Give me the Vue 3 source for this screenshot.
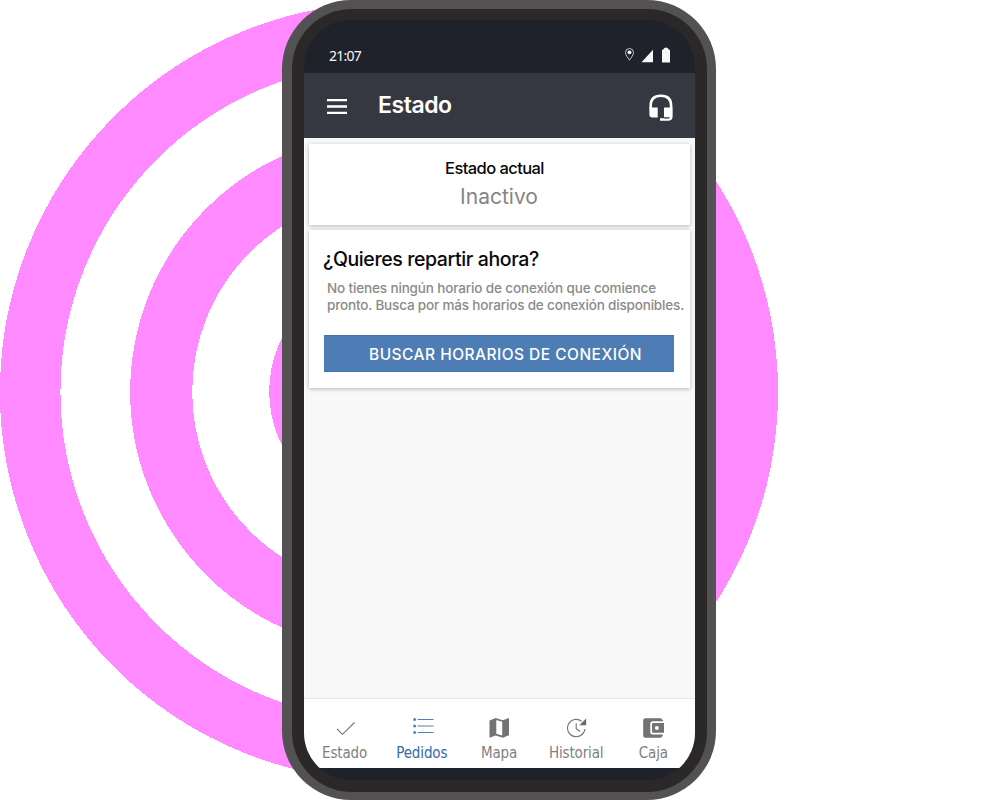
<script setup>
const tabs = [
  { id: 'estado', label: 'Estado' },
  { id: 'pedidos', label: 'Pedidos', active: true },
  { id: 'mapa', label: 'Mapa' },
  { id: 'historial', label: 'Historial' },
  { id: 'caja', label: 'Caja' },
]
</script>

<template>
  <main class="stage">
    <svg class="rings" viewBox="0 0 1000 800" shape-rendering="crispEdges" aria-hidden="true">
      <circle cx="389" cy="391.8" r="358.8" fill="none" stroke="#ff8aff" stroke-width="60.5" />
      <circle cx="389.2" cy="391.8" r="228" fill="none" stroke="#ff8aff" stroke-width="62" />
      <circle cx="389.2" cy="391.8" r="120" fill="#ff8aff" />
      <path d="M716 150H790V640H716Z" fill="#fff" />
      <circle cx="389" cy="391.8" r="389" fill="#ff8aff" clip-path="inset(0 0 0 327px)" />
    </svg>

    <section class="phone">
      <div class="bezel">
        <div class="screen">
          <div class="status">
            <span class="time">21:07</span>
            <svg class="signals" width="50" height="18" viewBox="0 0 50 18" aria-hidden="true">
              <path d="M5.500 13.200C3.800 10.400 1.500 8.200 1.500 5.500a4 4 0 0 1 8 0c0 2.700-2.300 4.900-4 7.700Z" fill="none" stroke="#c3c4c8" stroke-width="1" />
              <circle cx="5.500" cy="5.300" r="1.900" fill="#fff" />
              <path d="M29 2.800V15.200H17.500Z" fill="#f7f7f7" />
              <path d="M38 3.200 39.700 2Q40 .5 42 .5t2.300 1.500L46 3.200V15.500H38Z" fill="#f7f7f7" />
            </svg>
          </div>
          <header class="appbar">
            <svg class="menu" width="20" height="15" viewBox="0 0 20 15" aria-hidden="true">
              <path d="M0 1.200H20M0 7.500H20M0 13.800H20" stroke="#fff" stroke-width="2.300" />
            </svg>
            <h1>Estado</h1>
            <svg class="headset" width="24" height="28" viewBox="0 0 24 28" aria-hidden="true">
              <path d="M1.700 15V11.500C1.700 5.200 5.500 1.700 11.900 1.700S22.100 5.200 22.100 11.500V23q0 2.500-3 2.500H11" fill="none" stroke="#fff" stroke-width="2.600" />
              <path d="M.4 13.500H8.700V23.400H3.400Q.4 23.400.4 20.400ZM15 13.500H23.400V23.400H15Z" fill="#fff" />
              <path d="M15 23.900H20.500" stroke="#363841" stroke-width="1" />
            </svg>
          </header>

          <div class="content">
            <article class="card current">
              <h2>Estado actual</h2>
              <p>Inactivo</p>
            </article>
            <article class="card deliver">
              <h2>¿Quieres repartir ahora?</h2>
              <p><span class="l1">No tienes ningún horario de conexión que comience</span><br /><span class="l2">pronto. Busca por más horarios de conexión disponibles.</span></p>
              <button type="button">BUSCAR HORARIOS DE CONEXIÓN</button>
            </article>
          </div>

          <nav>
            <a v-for="tab in tabs" :key="tab.id" :class="['tab', tab.id, { active: tab.active }]">
              <svg width="24" height="24" viewBox="0 0 24 24" aria-hidden="true">
                <path v-if="tab.id === 'estado'" d="M4 15 9.500 20.300 21.500 8.500" fill="none" stroke="#747474" stroke-width="1.100" />
                <g v-else-if="tab.id === 'pedidos'" stroke="#4c80bb" stroke-width="1.200">
                  <path d="M7.500 5.500H23.500M7.500 12H23.500M7.500 18.500H23.500" />
                  <path d="M3.500 5.500H5.700M3.500 12H5.700M3.500 18.500H5.700" stroke="#2f67ad" stroke-width="2.300" />
                </g>
                <path v-else-if="tab.id === 'mapa'" d="M2.500 6.500 8.700 4 15.700 6.200 22 4V21.200L15.700 23.700 8.700 21.500 2.500 23.700ZM9.300 6V19.700L15.200 21.500V7.800Z" fill="#737373" fill-rule="evenodd" />
                <g v-else-if="tab.id === 'historial'" transform="translate(.6 .5)" fill="none" stroke="#737373" stroke-width="1.100">
                  <path d="M17 6.700A8.700 8.700 0 1 0 20.300 14.500M11.600 8.800V14.300L15.500 17" />
                  <path d="M21.500 4V10.700H14.800Z" fill="#686868" stroke="none" />
                </g>
                <g v-else>
                  <path d="M4.300 4.300H20L21.800 6.300V21.500L20 23.700H4.300Q2.200 23.700 2.200 21.500V6.300Q2.200 4.300 4.300 4.300Z" fill="#737373" />
                  <path d="M24 7.200H11.800Q9.300 7.200 9.300 9.700V18Q9.300 20.500 11.800 20.500H24V7.200Z" fill="#fff" />
                  <path d="M12 9H23V18.800H12Q11 18.800 11 17.800V10Q11 9 12 9Z" fill="#737373" />
                  <circle cx="15.900" cy="13.900" r="2" fill="#fff" />
                </g>
              </svg>
              <span>{{ tab.label }}</span>
            </a>
          </nav>
        </div>
      </div>
    </section>
  </main>
</template>

<style>
body { margin: 0; background: #fff; overflow: hidden; }
</style>

<style scoped>
* { box-sizing: border-box; }
h1, h2, p { margin: 0; font-weight: 400; }
.stage { width: 1000px; height: 800px; position: relative; background: #fff; padding-left: 282.300px; overflow: hidden; font-family: Inter, "Liberation Sans", sans-serif; white-space: nowrap; }
.rings { position: absolute; left: 0; top: 0; width: 1000px; height: 800px; }
.phone { position: relative; width: 434px; height: 800px; border-radius: 69px; background: #535151; padding: 9px 9px 8.500px 9.700px; }
.bezel { height: 100%; border-radius: 60px; background: #2b2829; padding: 11px 12px 11.500px; }
.screen { height: 100%; width: 391px; border-radius: 47px; overflow: hidden; background: #20222b; display: flex; flex-direction: column; }
.status { height: 53px; display: flex; justify-content: space-between; padding: 27px 21px 0 25px; color: #f7f7f7; }
.time { font: 14px/18px "Noto Sans", sans-serif; letter-spacing: -.75px; }
.appbar { height: 65px; background: #363841; display: flex; align-items: flex-start; padding: 0 21.500px 0 23px; color: #fff; }
.menu { margin-top: 26px; flex: none; }
h1 { font-size: 23px; line-height: 30px; font-weight: 600; margin: 17px auto 0 31px; letter-spacing: -.45px; }
.headset { margin-top: 21px; flex: none; }
.content { height: 560px; background: #f8f8f8; border-left: 1px solid #fff; padding: 6px 5px 0 4px; display: flex; flex-direction: column; gap: 5px; }
.card { background: #fff; box-shadow: 0 1px 4px rgba(0,0,0,.27); }
.current { height: 81px; text-align: center; padding-top: 12px; }
.current h2 { font-size: 16.500px; line-height: 24px; letter-spacing: -.58px; color: #080808; font-weight: 500; padding-right: 10px; }
.current p { font-size: 21px; line-height: 30px; margin-top: 2px; color: #858585; padding-right: 1px; }
.deliver { height: 158px; padding: 16px 15px 0 14px; }
.deliver h2 { font-size: 19.500px; line-height: 27px; color: #080808; font-weight: 500; letter-spacing: -.39px; }
.deliver p { font-size: 13.500px; line-height: 17px; font-weight: 500; color: #8a8a8a; margin: 7px 0 0 4px; letter-spacing: -.14px; }
.deliver .l2 { letter-spacing: -.17px; }
.deliver button { display: block; width: 350px; height: 37px; margin: 21px 0 0 1px; border: 1px solid #3f74ae; border-width: 1px 0; background: #4d7db4; color: #fff; padding: 2px 0 0 13px; font: 500 15.500px/33px Inter, sans-serif; letter-spacing: .47px; }
nav { height: 70px; background: #fff; border-top: 1px solid #e6e6e6; display: flex; justify-content: center; padding-right: 1px; }
.tab { width: 77.200px; display: flex; flex-direction: column; align-items: center; padding-top: 15px; color: #7f7f7f; font: 15px/20px "DejaVu Sans Condensed", "DejaVu Sans", sans-serif; letter-spacing: -.15px; }
.tab svg { display: block; }
.tab span { margin: 5px 0 0; }
.active { color: #3469aa; }
</style>
